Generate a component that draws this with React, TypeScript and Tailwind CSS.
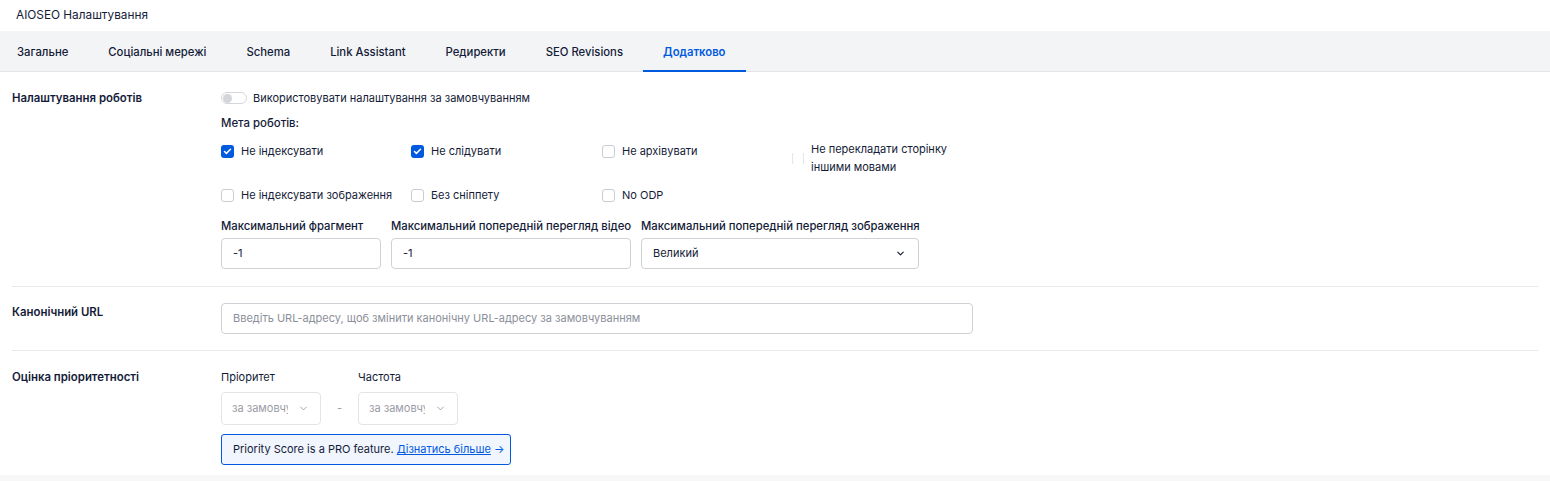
import { ChevronDown, Check } from 'lucide-react'

const tabs = ['Загальне', 'Соціальні мережі', 'Schema', 'Link Assistant', 'Редиректи', 'SEO Revisions', 'Додатково']

const metaOptions = [
  { label: 'Не індексувати', checked: true },
  { label: 'Не слідувати', checked: true },
  { label: 'Не архівувати', checked: false },
  { label: 'Не перекладати сторінку іншими мовами', checked: false, narrow: true },
  { label: 'Не індексувати зображення', checked: false },
  { label: 'Без сніппету', checked: false },
  { label: 'No ODP', checked: false },
]

function Box({ checked, narrow }: { checked: boolean; narrow?: boolean }) {
  if (checked) {
    return (
      <span className="w-[13px] h-[13px] rounded-[3px] bg-[#005ae0] flex items-center justify-center shrink-0">
        <Check className="w-[9px] h-[9px] text-white" strokeWidth={4} />
      </span>
    )
  }
  if (narrow) {
    return <span className="w-[12px] h-[13px] rounded-[3px] border border-[#e4e5ea] border-y-transparent shrink-0" />
  }
  return <span className="w-[13px] h-[13px] rounded-[3px] border border-[#c9cbd3] bg-white shrink-0" />
}

export default function App() {
  return (
    <div className="min-h-screen bg-[#f7f7f8] text-[11px] text-[#141b38]" style={{ fontFamily: 'Inter, "Noto Sans", sans-serif' }}>
      <div className="bg-white">
        <div className="h-[31px] flex items-center pl-4 text-[11.8px]">AIOSEO Налаштування</div>

        <div className="h-[41px] bg-[#f3f4f6] border-b border-[#e3e4e8] flex items-center pl-[17px] gap-10 text-[11.3px]">
          {tabs.map((t, i) => (
            <div
              key={t}
              className={`relative h-full flex items-center pt-[3px] font-medium ${i === tabs.length - 1 ? 'text-[#005ae0] font-semibold' : ''}`}
            >
              {t}
              {i === tabs.length - 1 && <span className="absolute -left-5 -right-5 -bottom-px h-[2px] bg-[#005ae0]" />}
            </div>
          ))}
        </div>

        {/* robots */}
        <div className="flex mx-3 pt-[17px] pb-[17px] border-b border-[#e8e9ec]">
          <div className="w-[209px] shrink-0 leading-[18px] font-semibold text-[11.4px]">Налаштування роботів</div>
          <div className="flex flex-col">
            <div className="flex items-center gap-[6px] leading-[18px]">
              <span className="w-[26px] h-[12px] rounded-full border border-[#d6d7dc] bg-white flex items-center px-[1px]">
                <span className="w-[9px] h-[9px] rounded-full bg-[#d4d5da]" />
              </span>
              <span>Використовувати налаштування за замовчуванням</span>
            </div>
            <div className="mt-[7px] leading-[18px] font-medium text-[11.4px]">Мета роботів:</div>
            <div className="mt-[10px] grid grid-cols-[190px_191px_190px_180px] gap-y-[10px] items-start">
              {metaOptions.map(o => (
                <div key={o.label} className={`flex items-center gap-[7px] leading-[18px] ${o.narrow ? '-mt-[2px]' : ''}`}>
                  <Box checked={o.checked} narrow={o.narrow} />
                  <span>{o.label}</span>
                </div>
              ))}
            </div>
            <div className="mt-[13px] flex gap-[10px]">
              <div className="w-[160px]">
                <div className="leading-[18px] font-medium whitespace-nowrap text-[11.3px]">Максимальний фрагмент</div>
                <div className="mt-[3px] h-[31px] border border-[#d0d1d7] rounded-[4px] flex items-center px-[11px]">-1</div>
              </div>
              <div className="w-[240px]">
                <div className="leading-[18px] font-medium whitespace-nowrap text-[11.3px]">Максимальний попередній перегляд відео</div>
                <div className="mt-[3px] h-[31px] border border-[#d0d1d7] rounded-[4px] flex items-center px-[11px]">-1</div>
              </div>
              <div className="w-[278px]">
                <div className="leading-[18px] font-medium whitespace-nowrap text-[11.3px]">Максимальний попередній перегляд зображення</div>
                <div className="mt-[3px] h-[31px] border border-[#d0d1d7] rounded-[4px] flex items-center justify-between pl-[11px] pr-[12px]">
                  <span>Великий</span>
                  <ChevronDown className="w-[11px] h-[11px]" strokeWidth={2.5} />
                </div>
              </div>
            </div>
          </div>
        </div>

        {/* canonical */}
        <div className="flex mx-3 py-4 border-b border-[#e8e9ec]">
          <div className="w-[209px] shrink-0 leading-[18px] font-semibold text-[11.4px]">Канонічний URL</div>
          <div className="w-[752px] h-[31px] border border-[#d0d1d7] rounded-[4px] flex items-center px-[11px] text-[#8c8f9a]">
            Введіть URL-адресу, щоб змінити канонічну URL-адресу за замовчуванням
          </div>
        </div>

        {/* priority */}
        <div className="flex mx-3 pt-[17px] pb-[10px]">
          <div className="w-[209px] shrink-0 leading-[18px] font-semibold text-[11.4px]">Оцінка пріоритетності</div>
          <div className="flex flex-col">
            <div className="flex items-end">
              <div className="w-[100px]">
                <div className="leading-[18px]">Пріоритет</div>
                <div className="mt-[6px] h-[33px] border border-[#e3e4e8] rounded-[4px] flex items-center justify-between pl-[10px] pr-[11px] text-[#9a9ca6]">
                  <span className="overflow-hidden whitespace-nowrap w-[56px]">за замовчуванням</span>
                  <ChevronDown className="w-[11px] h-[11px]" strokeWidth={2} />
                </div>
              </div>
              <div className="w-[37px] h-[33px] flex items-center justify-center text-[#9a9ca6]">-</div>
              <div className="w-[100px]">
                <div className="leading-[18px]">Частота</div>
                <div className="mt-[6px] h-[33px] border border-[#e3e4e8] rounded-[4px] flex items-center justify-between pl-[10px] pr-[11px] text-[#9a9ca6]">
                  <span className="overflow-hidden whitespace-nowrap w-[56px]">за замовчуванням</span>
                  <ChevronDown className="w-[11px] h-[11px]" strokeWidth={2} />
                </div>
              </div>
            </div>
            <div className="mt-[9px] w-[290px] h-[31px] border border-[#005ae0] bg-[#f0f5fe] rounded-[3px] flex items-center px-[11px] whitespace-nowrap">
              <span>Priority Score is a PRO feature.&nbsp;</span>
              <span className="text-[#005ae0] underline">Дізнатись більше</span>
              <span className="text-[#005ae0]">&nbsp;→</span>
            </div>
          </div>
        </div>
      </div>
    </div>
  )
}
